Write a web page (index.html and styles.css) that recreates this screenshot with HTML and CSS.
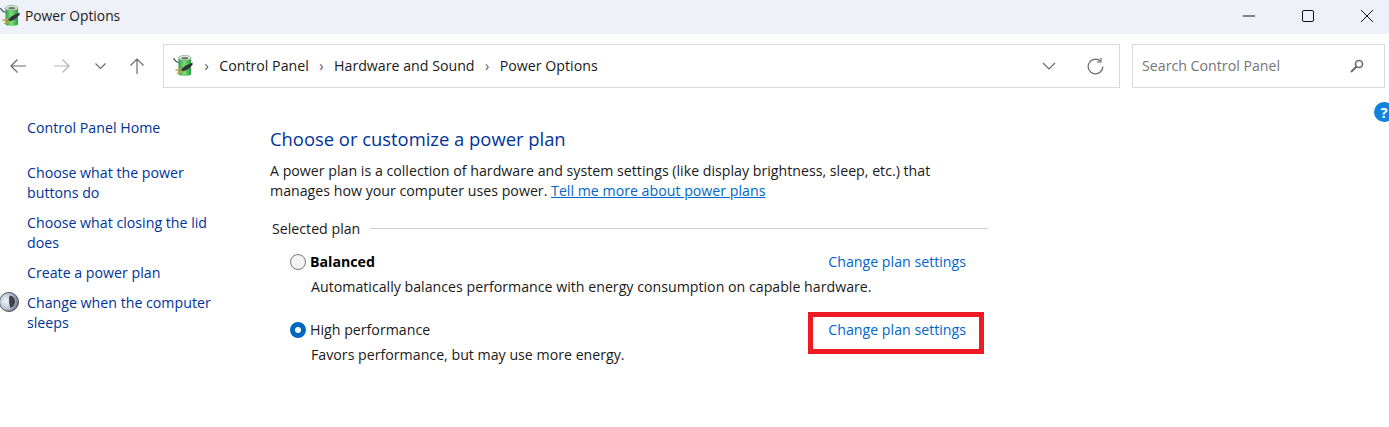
FILE: index.html
```html
<!DOCTYPE html>
<html lang="en">
<head>
    <meta charset="UTF-8">
    <meta name="viewport" content="width=device-width, initial-scale=1.0">
    <title>Power Options</title>
    <link rel="stylesheet" href="styles.css">
</head>
<body>
    <svg class="defs" width="0" height="0">
        <defs>
            <linearGradient id="cell" x1="0" y1="0" x2="1" y2="0">
                <stop offset="0" stop-color="#2f9a45"/>
                <stop offset="0.45" stop-color="#7fe07a"/>
                <stop offset="1" stop-color="#259a3c"/>
            </linearGradient>
            <radialGradient id="moon" cx="0.35" cy="0.45" r="0.7">
                <stop offset="0" stop-color="#f2f5fa"/>
                <stop offset="0.6" stop-color="#b8c2d6"/>
                <stop offset="1" stop-color="#4c5058"/>
            </radialGradient>
            <symbol id="power-icon" viewBox="0 0 20 22">
                <path d="M0.500 3C1.500 5.500 3 7 6 7.500" fill="none" stroke="#3a4f66" stroke-width="1.200"/>
                <path d="M5.500 3V19C5.500 21.500 18 21.500 18 19V3Z" fill="url(#cell)"/>
                <ellipse cx="11.800" cy="3" rx="6.300" ry="2.600" fill="#dfe8d8" stroke="#7f9f86" stroke-width="0.700"/>
                <ellipse cx="11.800" cy="3.200" rx="3.500" ry="1.200" fill="#5f7f6a"/>
                <path d="M8 14.500L12 11L19.500 7.500V10L14.500 14.500L9.500 16.500Z" fill="#2f333b"/>
                <path d="M2.500 15.500L8.500 13.800M4 18.500L10 16.300" stroke="#c6a24c" stroke-width="1.500" fill="none"/>
            </symbol>
        </defs>
    </svg>

    <header class="title-bar">
        <div class="title-left">
            <svg class="title-icon"><use href="#power-icon"/></svg>
            <span>Power Options</span>
        </div>
        <div class="window-btns">
            <svg width="12" height="12" viewBox="0 0 12 12"><path d="M0 6H12" stroke="#111" stroke-width="1"/></svg>
            <svg width="12" height="12" viewBox="0 0 12 12"><rect x="0.5" y="0.5" width="11" height="11" rx="1.5" fill="none" stroke="#111"/></svg>
            <svg width="12" height="12" viewBox="0 0 12 12"><path d="M0 0L12 12M12 0L0 12" stroke="#111" stroke-width="1"/></svg>
        </div>
    </header>

    <nav class="nav-bar">
        <div class="nav-btns">
            <svg class="nav-back" width="16" height="16" viewBox="0 0 16 16"><path d="M16 8H1M7.500 1.500L1 8L7.500 14.500" fill="none" stroke="#6a6a6a" stroke-width="1.200"/></svg>
            <svg class="nav-fwd" width="16" height="16" viewBox="0 0 16 16"><path d="M0 8H15M8.500 1.500L15 8L8.500 14.500" fill="none" stroke="#b4b4b4" stroke-width="1.200"/></svg>
            <svg width="13" height="8" viewBox="0 0 13 8"><path d="M1.500 1.500L6.500 6.500L11.500 1.500" fill="none" stroke="#6a6a6a" stroke-width="1.200"/></svg>
            <svg width="16" height="16" viewBox="0 0 16 16"><path d="M8 16V1M1.500 7.500L8 1L14.500 7.500" fill="none" stroke="#6a6a6a" stroke-width="1.200"/></svg>
        </div>
        <div class="address-box">
            <svg class="address-icon"><use href="#power-icon"/></svg>
            <span class="crumb-sep">&#8250;</span><span>Control Panel</span>
            <span class="crumb-sep">&#8250;</span><span>Hardware and Sound</span>
            <span class="crumb-sep">&#8250;</span><span>Power Options</span>
            <div class="address-tools">
                <svg width="14" height="8" viewBox="0 0 14 8"><path d="M1 1L7 7L13 1" fill="none" stroke="#6a6a6a" stroke-width="1.200"/></svg>
                <svg width="17" height="17" viewBox="0 0 17 17"><path d="M13.500 3.200A7.300 7.300 0 1 0 15.800 8.500" fill="none" stroke="#6a6a6a" stroke-width="1.200"/><path d="M14 0V4H10" fill="none" stroke="#6a6a6a" stroke-width="1.200"/></svg>
            </div>
        </div>
        <div class="search-box">
            <span>Search Control Panel</span>
            <svg width="14" height="14" viewBox="0 0 14 14"><circle cx="9" cy="5" r="3.500" fill="none" stroke="#6a6a6a" stroke-width="1.600"/><path d="M6.500 7.500L1 13" stroke="#6a6a6a" stroke-width="2"/></svg>
        </div>
    </nav>

    <div class="help-btn">?</div>

    <div class="content">
        <aside class="side-pane">
            <a class="home-link">Control Panel Home</a>
            <a>Choose what the power buttons do</a>
            <a>Choose what closing the lid does</a>
            <a>Create a power plan</a>
            <a class="sleep-link">
                <svg class="moon-icon" width="20" height="20" viewBox="0 0 20 20">
                    <circle cx="10" cy="10" r="9.500" fill="url(#moon)" stroke="#55585f"/>
                    <path d="M10.500 3.500C14 3.500 16.500 6.500 16 10.500C15.500 13.500 13.500 15.500 11.500 16C10 12 9.500 7 10.500 3.500Z" fill="#3f424a"/>
                </svg>
                Change when the computer sleeps
            </a>
        </aside>

        <main class="main-pane">
            <h1>Choose or customize a power plan</h1>
            <p class="intro">A power plan is a collection of hardware and system settings (like display brightness, sleep, etc.) that manages how your computer uses power. <a class="more-link">Tell me more about power plans</a></p>

            <div class="group-label"><span>Selected plan</span><div class="group-rule"></div></div>

            <div class="plan">
                <div class="plan-head">
                    <span class="radio"></span>
                    <span class="plan-name bold">Balanced</span>
                    <a class="plan-link">Change plan settings</a>
                </div>
                <p class="plan-desc">Automatically balances performance with energy consumption on capable hardware.</p>
            </div>

            <div class="plan">
                <div class="plan-head">
                    <span class="radio checked"></span>
                    <span class="plan-name">High performance</span>
                    <a class="plan-link">Change plan settings</a>
                </div>
                <p class="plan-desc">Favors performance, but may use more energy.</p>
            </div>
        </main>
    </div>

    <div class="red-box"></div>
</body>
</html>
```

FILE: styles.css
```css
body {
    margin: 0;
    height: 427px;
    overflow: hidden;
    position: relative;
    background-color: #fff;
    color: #1a1a1a;
    font-family: "Open Sans", "Liberation Sans", sans-serif;
    font-size: 14.2px;
    line-height: 20px;
}
a {
    color: #0066cc;
}
.defs {
    position: absolute;
}
.title-bar {
    height: 34px;
    box-sizing: border-box;
    padding-bottom: 2px;
    background-color: #eef2f8;
    display: flex;
    justify-content: space-between;
    align-items: center;
}
.title-left {
    display: flex;
    align-items: center;
    gap: 5px;
    font-size: 13.8px;
}
.title-icon {
    width: 20px;
    height: 22px;
}
.window-btns {
    display: flex;
    gap: 47px;
    padding-right: 16px;
}
.nav-bar {
    display: flex;
    height: 44px;
    padding-top: 10px;
}
.nav-btns {
    width: 163px;
    display: flex;
    align-items: center;
    gap: 22px;
    padding-left: 10px;
    box-sizing: border-box;
}
.nav-back {
    margin-right: 6px;
}
.nav-fwd {
    margin-right: 2px;
}
.address-box {
    width: 957px;
    box-sizing: border-box;
    border: 1px solid #d9d9d9;
    display: flex;
    align-items: center;
    padding-left: 9px;
    gap: 10.5px;
}
.address-icon {
    width: 20px;
    height: 22px;
    margin-right: 1px;
}
.crumb-sep {
    color: #555;
}
.address-tools {
    margin-left: auto;
    display: flex;
    align-items: center;
    gap: 31px;
    padding-right: 15px;
}
.search-box {
    margin-left: 12px;
    width: 253px;
    box-sizing: border-box;
    border: 1px solid #d9d9d9;
    display: flex;
    align-items: center;
    justify-content: space-between;
    padding: 0 20px 0 9px;
    color: #757575;
}
.help-btn {
    position: absolute;
    left: 1374px;
    top: 102px;
    width: 20px;
    height: 20px;
    border-radius: 50%;
    background-color: #0f83de;
    color: #fff;
    font-weight: 700;
    font-size: 15px;
    line-height: 20px;
    text-align: center;
}
.content {
    display: flex;
    padding-top: 20px;
}
.side-pane {
    width: 270px;
    box-sizing: border-box;
    padding: 10px 50px 0 27px;
    display: flex;
    flex-direction: column;
    gap: 10px;
}
.side-pane a {
    color: #003399;
}
.side-pane .home-link {
    margin-bottom: 15px;
}
.sleep-link {
    position: relative;
}
.moon-icon {
    position: absolute;
    left: -28px;
    top: -1px;
}
.main-pane {
    width: 718px;
}
h1 {
    margin: 0;
    padding-top: 18px;
    color: #003399;
    font-size: 18.4px;
    font-weight: 400;
    line-height: 26px;
}
.intro {
    margin: 9px 0 0;
    width: 690px;
}
.more-link {
    color: #0066cc;
    text-decoration: underline;
}
.group-label {
    display: flex;
    align-items: center;
    gap: 10px;
    margin: 18px 0 0 2px;
}
.group-rule {
    flex: 1;
    height: 1px;
    background-color: #cfcfcf;
    margin-top: -2px;
}
.plan {
    padding: 13px 22px 0 20px;
}
.plan + .plan {
    padding-top: 23px;
}
.plan-head {
    display: flex;
    align-items: center;
    gap: 4px;
}
.radio {
    box-sizing: border-box;
    width: 16px;
    height: 16px;
    border: 1px solid #767676;
    border-radius: 50%;
    background-color: #f3f3f3;
}
.radio.checked {
    border: 5px solid #0067c0;
    background-color: #fff;
}
.plan-name.bold {
    font-weight: 700;
    color: #000;
}
.plan-link {
    margin-left: auto;
}
.plan-desc {
    margin: 5px 0 0 21px;
}
.red-box {
    position: absolute;
    left: 808px;
    top: 312px;
    width: 166px;
    height: 32px;
    border: 5px solid #ed1c24;
}
```
